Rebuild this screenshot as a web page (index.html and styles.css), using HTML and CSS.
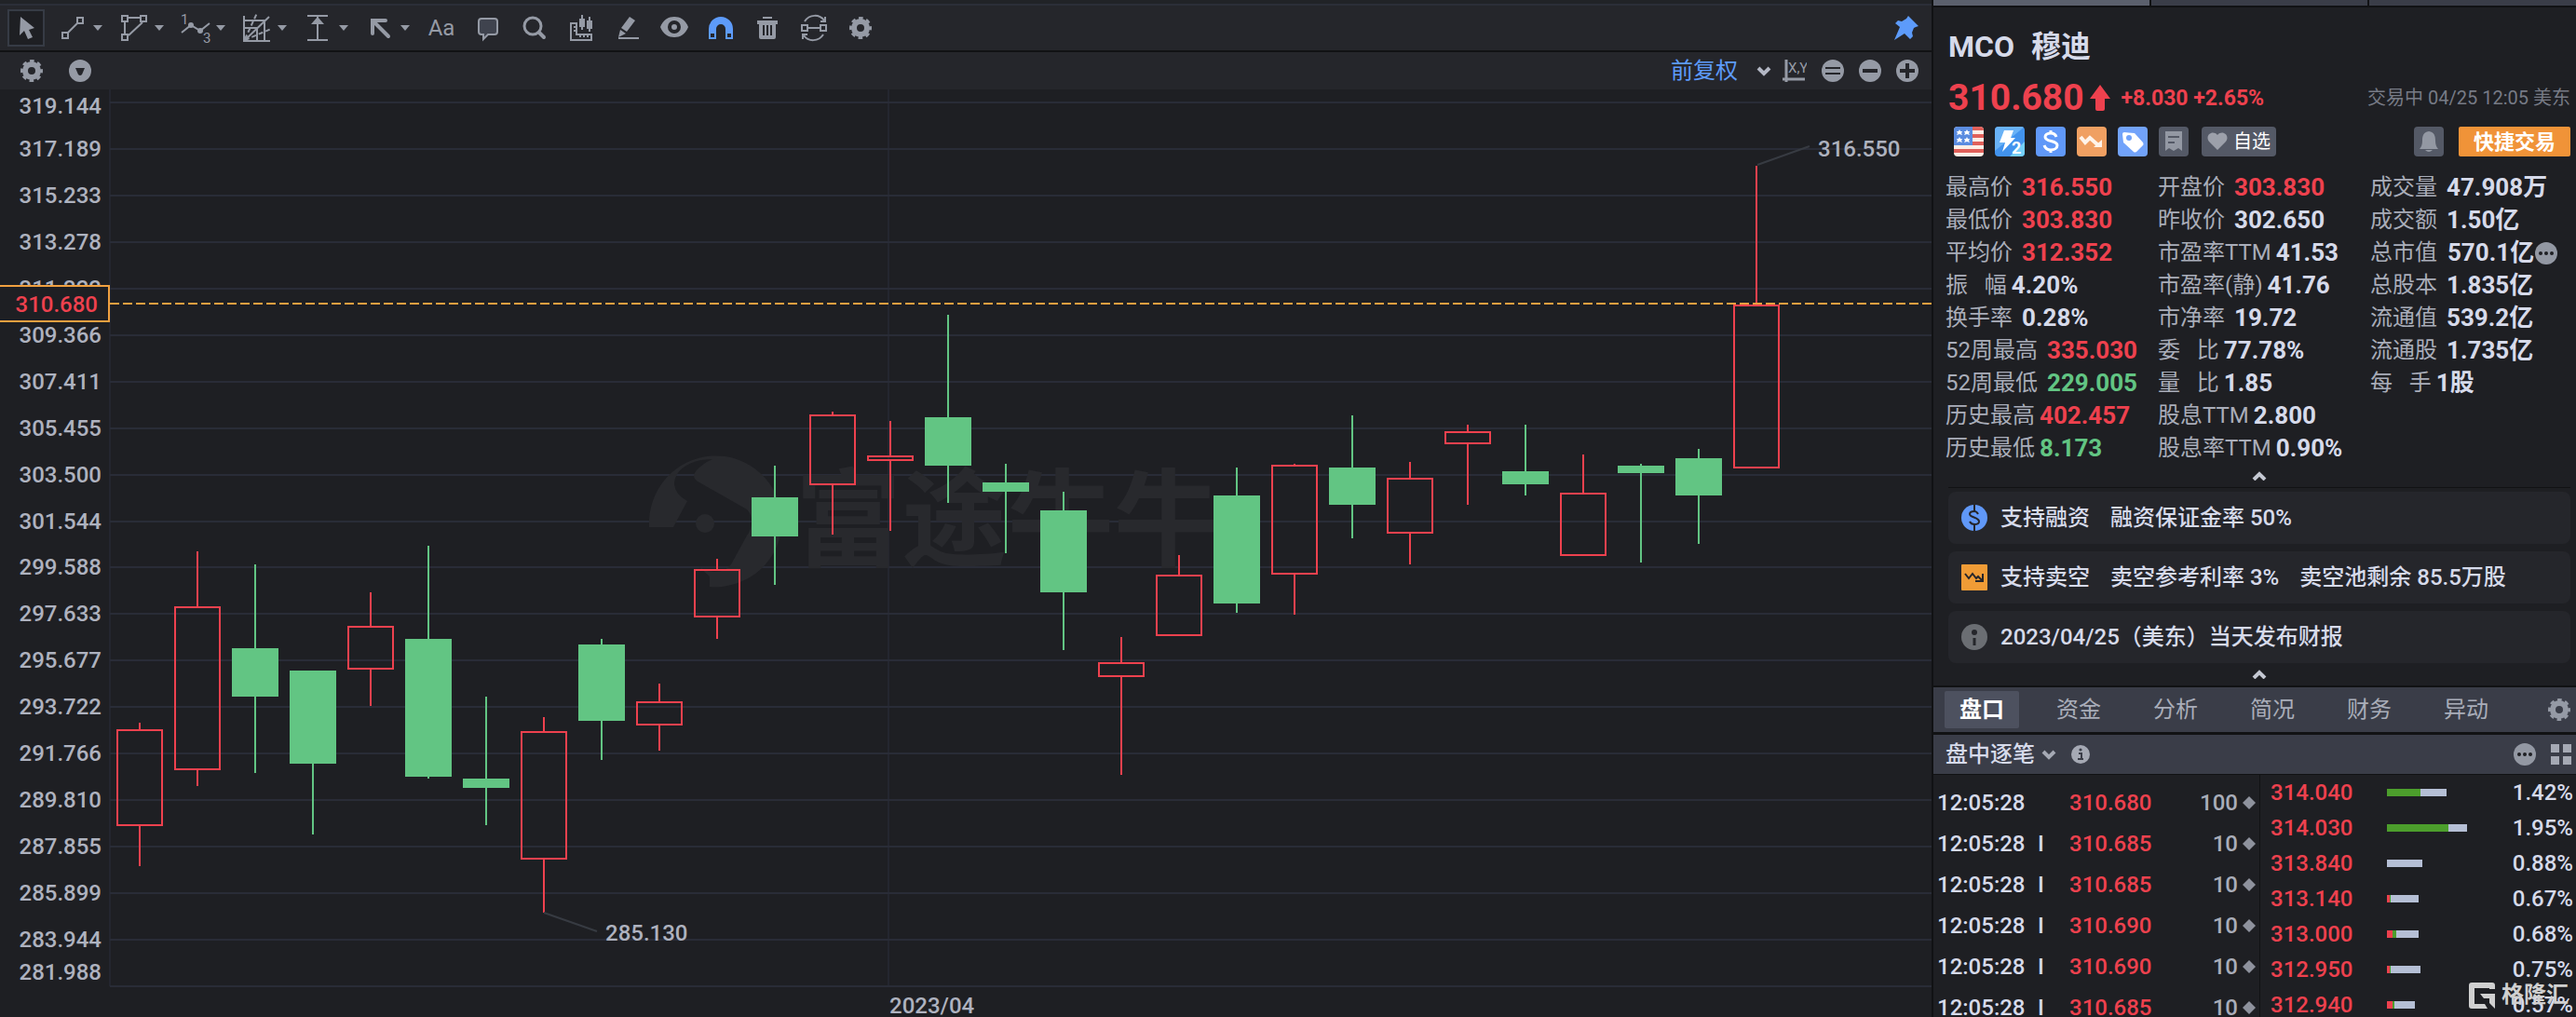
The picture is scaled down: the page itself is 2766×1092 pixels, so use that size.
FILE: index.html
```html
<!DOCTYPE html>
<html lang="zh-CN">
<head>
    <meta charset="utf-8">
    <meta name="viewport" content="width=device-width, initial-scale=1">
    <title>MCO 穆迪</title>
    <link rel="stylesheet" href="styles.css">
</head>

<body>
    <svg class="defs" aria-hidden="true">
        <symbol id="gear" viewBox="0 0 24 24">
            <circle cx="12" cy="12" r="7" fill="none" stroke="currentColor" stroke-width="6"/>
            <circle cx="12" cy="12" r="10.5" fill="none" stroke="currentColor" stroke-width="3" stroke-dasharray="4.6 3.65" stroke-dashoffset="2.3"/>
        </symbol>
        <symbol id="caret" viewBox="0 0 10 6">
            <path d="M0 0h10L5 6z" fill="currentColor"/>
        </symbol>
        <symbol id="up" viewBox="0 0 16 10">
            <path d="M2 9l6-6 6 6" fill="none" stroke="currentColor" stroke-width="4"/>
        </symbol>
        <symbol id="down" viewBox="0 0 16 12">
            <path d="M2 3l6 6 6-6" fill="none" stroke="currentColor" stroke-width="4"/>
        </symbol>
        <symbol id="dots" viewBox="0 0 24 24">
            <circle cx="12" cy="12" r="12" fill="currentColor"/>
            <g fill="#1e1f23"><circle cx="6" cy="12" r="2"/><circle cx="12" cy="12" r="2"/><circle cx="18" cy="12" r="2"/></g>
        </symbol>
    </svg>

    <div class="app">
        <main class="chart">
            <div class="strip"></div>
            <div class="toolbar">
                <button type="button" class="pick active" aria-label="选择"><svg viewBox="0 0 36 36"><path d="M12 6l15 12-6 2 4 8-5 2-4-9-5 5z" fill="currentColor"/></svg></button>
                <button type="button" class="tool" aria-label="线段"><svg viewBox="0 0 36 36" class="ln"><path d="M7 23h6v6H7zM23 7h6v6h-6zM13 23l10-10"/></svg><svg class="caret"><use href="#caret"/></svg></button>
                <button type="button" class="tool" aria-label="形状"><svg viewBox="0 0 36 36" class="ln"><path d="M5 5h6v6H5zM25 5h6v6h-6zM5 25h6v6H5zM12 7h12M8 12v12M12 26l15-14"/></svg><svg class="caret"><use href="#caret"/></svg></button>
                <button type="button" class="tool" aria-label="波浪"><svg viewBox="0 0 36 36" class="ln wave"><path d="M3 23l10-8 10 6 10-8"/><g class="fl"><circle cx="13" cy="15" r="3"/><circle cx="23" cy="21" r="3"/><text x="2" y="14">1</text><text x="26" y="34">3</text></g></svg><svg class="caret"><use href="#caret"/></svg></button>
                <button type="button" class="tool" aria-label="江恩"><svg viewBox="0 0 36 36" class="ln"><path d="M4 5v27h28M4 10h22v22M4 18h14v14M4 32L31 6"/><path d="M5 30L18 2M5 31l28-12" stroke-dasharray="5 3"/></svg><svg class="caret"><use href="#caret"/></svg></button>
                <button type="button" class="tool" aria-label="测量"><svg viewBox="0 0 36 36" class="ln"><path d="M6 5h22M6 31h22M17 6v25"/><path class="fl" d="M17 6l7 8H10z"/></svg><svg class="caret"><use href="#caret"/></svg></button>
                <button type="button" class="tool" aria-label="箭头"><svg viewBox="0 0 36 36" class="ln bold"><path d="M24 10H10v14M11 11l16 16"/></svg><svg class="caret"><use href="#caret"/></svg></button>
                <button type="button" class="single text">Aa</button>
                <button type="button" class="single" aria-label="注释"><svg viewBox="0 0 36 36" class="ln"><path d="M11 8h14a3 3 0 0 1 3 3v11a3 3 0 0 1-3 3h-7l-5 5v-5h-2a3 3 0 0 1-3-3V11a3 3 0 0 1 3-3z" fill="#3f434e"/></svg></button>
                <button type="button" class="single" aria-label="放大"><svg viewBox="0 0 36 36" class="ln bold"><circle cx="16" cy="16" r="9" stroke-width="3"/><path d="M23 23l5 5"/></svg></button>
                <button type="button" class="single" aria-label="区间统计"><svg viewBox="0 0 36 36" class="ln"><path d="M7 13h6v12h16v6H7zM10 17h3M10 21h3M17 28v-3M21 28v-3M25 28v-3M19 4v16M27 6v16"/><path class="fl" d="M16 8h6v9h-6zM24 10h6v9h-6z"/></svg></button>
                <button type="button" class="single" aria-label="画笔"><svg viewBox="0 0 36 36" class="ln"><path d="M8 29h22"/><path class="fl" d="M20 6l6 4-9 12-6-4zM10 20l6 4-8 4z"/></svg></button>
                <button type="button" class="single" aria-label="显示"><svg viewBox="0 0 36 36"><path d="M3 17C6 9 12 6 18 6s12 3 15 11c-3 8-9 11-15 11S6 25 3 17z" fill="currentColor"/><circle cx="18" cy="17" r="5" fill="currentColor" stroke="#25262b" stroke-width="4"/></svg></button>
                <button type="button" class="single blue" aria-label="磁铁"><svg viewBox="0 0 36 36"><path d="M5 30V19a13 13 0 0 1 26 0v11h-8V19a5 5 0 0 0-10 0v11z" fill="currentColor"/><path d="M7 24h4v4H7zM25 24h4v4h-4z" fill="#25262b"/></svg></button>
                <button type="button" class="single" aria-label="删除"><svg viewBox="0 0 36 36"><path d="M13 6h10v2H13zM7 10h22v4h-2v14a2 2 0 0 1-2 2H11a2 2 0 0 1-2-2V14H7z" fill="currentColor"/><path d="M14 15v11M18 15v11M22 15v11" stroke="#25262b" stroke-width="2"/></svg></button>
                <button type="button" class="single" aria-label="同步"><svg viewBox="0 0 36 36" class="ln"><path d="M5 15h6v6H5zM25 15h6v6h-6zM12 18h12M8 11c5-8 16-8 21-1M30 6v5h-5M28 25c-5 8-16 8-21 1M6 30v-5h5"/></svg></button>
                <button type="button" class="single" aria-label="设置"><svg class="i24"><use href="#gear"/></svg></button>
                <button type="button" class="pin blue" aria-label="固定"><svg viewBox="0 0 26 26"><path d="M15 0l11 11-3 1-2 1-2 5 1 4-3 3-6-6L0 26l6-14-5-4 3-3 4 1 5-3z" fill="currentColor"/></svg></button>
            </div>
            <div class="subbar">
                <button type="button" aria-label="图表设置"><svg class="i24"><use href="#gear"/></svg></button>
                <button type="button" aria-label="展开"><svg class="i24" viewBox="0 0 24 24"><circle cx="12" cy="12" r="12" fill="currentColor"/><path d="M7 9h10l-3 7q-2 2-4 0z" fill="#25262b"/></svg></button>
                <label class="adjust"><select aria-label="复权方式"><option>前复权</option></select><svg class="chev"><use href="#down"/></svg></label>
                <button type="button" class="xy" aria-label="坐标"><svg viewBox="0 0 26 24" class="ln"><path d="M4 0v24M0 21h24" stroke-width="3"/><text x="6" y="14">X,Y</text></svg></button>
                <div class="zooms">
                    <button type="button" aria-label="重置"><svg class="i24" viewBox="0 0 24 24"><circle cx="12" cy="12" r="12" fill="currentColor"/><path d="M4 9h16M4 15h16" stroke="#25262b" stroke-width="2"/></svg></button>
                    <button type="button" aria-label="缩小"><svg class="i24" viewBox="0 0 24 24"><circle cx="12" cy="12" r="12" fill="currentColor"/><path d="M4 12h16" stroke="#25262b" stroke-width="4"/></svg></button>
                    <button type="button" aria-label="放大"><svg class="i24" viewBox="0 0 24 24"><circle cx="12" cy="12" r="12" fill="currentColor"/><path d="M4 12h16M12 4v16" stroke="#25262b" stroke-width="4"/></svg></button>
                </div>
            </div>
            <svg id="kline" class="kline" viewBox="0 96 2074 996">
                <g id="grid"></g>
                <g class="mark">
                    <path d="M697 566A71 72 0 0 1 840 558A72 72 0 0 1 762 630V619L750 608Q758 614 767 614C776 614 781 611 785 606L802 575Q807 569 807 560Q807 552 802 547L751 518Q741 513 748 505Q755 497 765 493C742 493 724 504 724 520Q725 531 738 538L723 566z"/>
                    <circle cx="757" cy="562" r="10"/>
                    <text x="854" y="599">富途牛牛</text>
                </g>
                <g id="candles"></g>
                <path class="last" d="M118 326H2074"/>
                <path class="lead" d="M1887 177l56-20M584 980l57 20"/>
                <text class="lbl" x="1952" y="168">316.550</text>
                <text class="lbl" x="650" y="1010">285.130</text>
                <text class="lbl" x="955" y="1088">2023/04</text>
                <rect class="tag" x="-2" y="307" width="119" height="38"/>
                <text class="lbl now" x="105" y="335">310.680</text>
            </svg>
        </main>

        <aside class="side">
            <div class="pages"><span class="on"></span><span></span><span></span></div>
            <header class="quote">
                <h1>MCO <span>穆迪</span></h1>
                <div class="price">
                    <strong>310.680</strong>
                    <svg viewBox="0 0 22 28"><path d="M11 0l11 15h-6v11q0 2-2 2H8q-2 0-2-2V15H0z" fill="currentColor"/></svg>
                    <b>+8.030 +2.65%</b>
                    <time>交易中 04/25 12:05 美东</time>
                </div>
                <div class="badges">
                    <svg viewBox="0 0 32 32"><path d="M0 0h32v32H0z" fill="#fdeee6"/><path d="M20 0h12v4H20zM20 8h12v4H20zM20 16h12v4H20zM0 24h32v4H0z" fill="#e0605a"/><path d="M0 0h20v20H0z" fill="#5b8ce0"/><g fill="#fff"><path id="s" d="M6 3l1 2h2l-1 2 1 2-3-1-3 1 1-2-1-2h2z"/><use href="#s" x="8"/><use href="#s" y="8"/><use href="#s" x="8" y="8"/></g></svg>
                    <svg viewBox="0 0 32 32"><path d="M0 0h32v32H0z" fill="#4293ee"/><path d="M0 0h32L0 26z" fill="#69b2f6"/><path d="M32 16v16H16z" fill="#74d0fb"/><path d="M10 4h10l-3 8h5L8 27l3-10H5z" fill="#fff"/><text x="18" y="29" class="two">2</text></svg>
                    <svg viewBox="0 0 32 32"><path d="M0 0h32v32H0z" fill="#6098f8"/><path d="M22 11c-1-3-4-4-6-4-4 0-6 2-6 4 0 6 13 3 13 9 0 3-3 5-7 5s-6-2-7-5M16 4v4M16 24v4" fill="none" stroke="#fff" stroke-width="3"/></svg>
                    <svg viewBox="0 0 32 32"><path d="M0 0h32v32H0z" fill="#f0a062"/><path d="M4 11l5 6 5-5 9 8" fill="none" stroke="#fff4ea" stroke-width="4"/><path d="M27 14v8h-9z" fill="#fff4ea"/></svg>
                    <svg viewBox="0 0 32 32"><path d="M0 0h32v32H0z" fill="#72a3fa"/><path d="M5 8q0-2 2-2l11 1 9 10q1 2 0 3l-7 7q-2 1-3 0L6 17z" fill="#fff"/><circle cx="12" cy="12" r="3" fill="#72a3fa"/></svg>
                    <svg viewBox="0 0 32 32"><path d="M0 0h32v32H0z" fill="#545966"/><path d="M7 5h18v21l-4-3-5 3-5-3-4 3z" fill="#9398a3"/><path d="M10 11h12M10 17h7" stroke="#545966" stroke-width="2"/></svg>
                    <button type="button" class="fav"><svg viewBox="0 0 22 20"><path d="M11 19L2 10C-3 3 6-3 11 3c5-6 14 0 9 7z" fill="#9ca0aa"/></svg>自选</button>
                    <button type="button" class="bell" aria-label="提醒"><svg viewBox="0 0 32 32"><path d="M16 5c6 1 7 5 7 10 0 4 1 7 3 9H6c2-2 3-5 3-9 0-5 1-9 7-10zM12 25h8q-4 4-8 0z" fill="#9398a3"/></svg></button>
                    <button type="button" class="trade">快捷交易</button>
                </div>
            </header>

            <div class="stats">
                <dl>
                    <div><dt>最高价</dt><dd class="red">316.550</dd></div>
                    <div><dt>最低价</dt><dd class="red">303.830</dd></div>
                    <div><dt>平均价</dt><dd class="red">312.352</dd></div>
                    <div class="tight"><dt>振&nbsp;&nbsp;&nbsp;幅</dt><dd>4.20%</dd></div>
                    <div><dt>换手率</dt><dd>0.28%</dd></div>
                    <div><dt>52周最高</dt><dd class="red">335.030</dd></div>
                    <div><dt>52周最低</dt><dd class="green">229.005</dd></div>
                    <div class="tight"><dt>历史最高</dt><dd class="red">402.457</dd></div>
                    <div class="tight"><dt>历史最低</dt><dd class="green">8.173</dd></div>
                </dl>
                <dl>
                    <div><dt>开盘价</dt><dd class="red">303.830</dd></div>
                    <div><dt>昨收价</dt><dd>302.650</dd></div>
                    <div class="tight"><dt>市盈率TTM</dt><dd>41.53</dd></div>
                    <div class="tight"><dt>市盈率(静)</dt><dd>41.76</dd></div>
                    <div><dt>市净率</dt><dd>19.72</dd></div>
                    <div class="tight"><dt>委&nbsp;&nbsp;&nbsp;比</dt><dd>77.78%</dd></div>
                    <div class="tight"><dt>量&nbsp;&nbsp;&nbsp;比</dt><dd>1.85</dd></div>
                    <div class="tight"><dt>股息TTM</dt><dd>2.800</dd></div>
                    <div class="tight"><dt>股息率TTM</dt><dd>0.90%</dd></div>
                </dl>
                <dl>
                    <div><dt>成交量</dt><dd>47.908万</dd></div>
                    <div><dt>成交额</dt><dd>1.50亿</dd></div>
                    <div class="tight"><dt>总市值&nbsp;</dt><dd>570.1亿</dd><svg class="i24"><use href="#dots"/></svg></div>
                    <div><dt>总股本</dt><dd>1.835亿</dd></div>
                    <div><dt>流通值</dt><dd>539.2亿</dd></div>
                    <div><dt>流通股</dt><dd>1.735亿</dd></div>
                    <div class="tight"><dt>每&nbsp;&nbsp;&nbsp;手</dt><dd>1股</dd></div>
                </dl>
            </div>
            <button type="button" class="fold" aria-label="收起"><svg><use href="#up"/></svg></button>

            <div class="cards">
                <p><svg viewBox="0 0 28 28"><circle cx="14" cy="14" r="14" fill="#6098f8"/><path d="M14 0v7M14 21v7" stroke="#25262b" stroke-width="2"/><path d="M18 10c-1-2-2-3-4-3-3 0-5 1-5 3 0 4 10 3 10 8 0 2-2 3-5 3s-4-1-5-3" fill="none" stroke="#25262b" stroke-width="2"/></svg><span>支持融资</span><span>融资保证金率 50%</span></p>
                <p><svg viewBox="0 0 28 28"><rect width="28" height="28" rx="1" fill="#f09c36"/><path d="M4 10l4 5 4-5 4 5 2-2 4 4M23 10v8h-8" fill="none" stroke="#25262b" stroke-width="2"/></svg><span>支持卖空</span><span>卖空参考利率 3%</span><span>卖空池剩余 85.5万股</span></p>
                <p><svg viewBox="0 0 28 28"><circle cx="14" cy="14" r="14" fill="#6b6e73"/><circle cx="14" cy="9" r="3" fill="#25262b"/><path d="M14 15v8" stroke="#25262b" stroke-width="3"/></svg><span>2023/04/25（美东）当天发布财报</span></p>
            </div>
            <button type="button" class="fold" aria-label="收起提示"><svg><use href="#up"/></svg></button>

            <nav class="tabs">
                <a href="#" class="on">盘口</a>
                <a href="#">资金</a>
                <a href="#">分析</a>
                <a href="#">简况</a>
                <a href="#">财务</a>
                <a href="#">异动</a>
                <button type="button" aria-label="设置"><svg class="i24"><use href="#gear"/></svg></button>
            </nav>
            <div class="tickbar">
                <label><select aria-label="逐笔"><option>盘中逐笔</option></select><svg class="chev"><use href="#down"/></svg></label>
                <svg class="info" viewBox="0 0 20 20"><circle cx="10" cy="10" r="10" fill="currentColor"/><path d="M8 9h3v6M7 15h6" fill="none" stroke="#3a3d48" stroke-width="2"/><circle cx="10" cy="5" r="1.6" fill="#3a3d48"/></svg>
                <svg class="i24 more"><use href="#dots"/></svg>
                <svg class="apps" viewBox="0 0 22 22"><path d="M0 0h9v9H0zM13 0h9v9h-9zM0 13h9v9H0zM13 13h9v9h-9z" fill="currentColor"/></svg>
            </div>
            <div class="ticks">
                <table class="trades"><tbody id="trades"></tbody></table>
                <table class="levels"><tbody id="levels"></tbody></table>
            </div>
        </aside>
        <div class="brand"><svg viewBox="0 0 28 28"><path d="M28 7V3q0-3-3-3H3Q0 0 0 3v22q0 3 3 3h17l-3-5H6V6h16v1zM12 12h16v16l-6-6v-5h-6z" fill="currentColor"/></svg>格隆汇</div>
    </div>
    <script src="script.js"></script>
</body>
</html>
```
FILE: styles.css
```css
* {
    box-sizing: border-box;
}

body {
    margin: 0;
    background: #1e1f23;
    color: #d6daea;
    font-family: Roboto, "Noto Sans CJK SC", sans-serif;
    font-size: 24px;
    line-height: 35px;
}

button,
select {
    margin: 0;
    padding: 0;
    border: 0;
    background: none;
    color: inherit;
    font: inherit;
    appearance: none;
    cursor: pointer;
}

button {
    display: flex;
    align-items: center;
    justify-content: center;
}

svg {
    display: block;
    flex: none;
}

.defs {
    position: absolute;
    width: 0;
    height: 0;
}

.i24 {
    width: 24px;
    height: 24px;
}

.chev {
    width: 16px;
    height: 12px;
}

.blue {
    color: #5d9bfa;
}

.red {
    color: #ee414e;
}

.green {
    color: #62c583;
}

.app {
    position: relative;
    display: flex;
    height: 100vh;
    overflow: hidden;
}

/* chart */
.chart {
    flex: 1;
    min-width: 0;
    color: #959aa5;
}

.strip {
    height: 6px;
    background: #212327;
    border-bottom: 2px solid #2b2e38;
}

.toolbar {
    display: flex;
    align-items: center;
    height: 50px;
    padding: 0 14px 0 8px;
    background: #25262b;
    border-bottom: 2px solid #111214;
}

.toolbar svg {
    width: 36px;
    height: 36px;
}

.toolbar .caret {
    width: 10px;
    height: 6px;
}

.toolbar .i24 {
    width: 24px;
    height: 24px;
}

.pick {
    width: 40px;
    height: 40px;
    margin-right: 12px;
    background: #1e1f23;
    border: 2px solid #363b45;
}

.tool {
    gap: 4px;
    margin-right: 16px;
}

.single {
    width: 36px;
    margin-right: 14px;
}

.pin {
    margin-left: auto;
}

.toolbar .pin svg {
    width: 26px;
    height: 26px;
}

.ln {
    fill: none;
    stroke: currentColor;
    stroke-width: 2;
}

.ln.bold {
    stroke-width: 4;
    stroke-linecap: round;
}

.ln.wave {
    overflow: visible;
}

.ln .fl,
.ln text {
    fill: currentColor;
    stroke: none;
    font-size: 15px;
}

.subbar {
    display: flex;
    align-items: center;
    gap: 28px;
    height: 40px;
    padding: 0 14px 0 22px;
    background: #25262b;
}

.adjust {
    display: flex;
    align-items: center;
    gap: 20px;
    margin-left: auto;
    color: #b3b7c4;
}

.adjust select {
    color: #5d9bfa;
}

.subbar .xy {
    margin-left: -16px;
}

.xy svg {
    width: 26px;
    height: 24px;
}

.zooms {
    display: flex;
    gap: 16px;
    margin-left: -12px;
}

.kline {
    width: 100%;
}

.grid {
    stroke: #292c37;
    stroke-width: 2;
}

.lbl {
    fill: #aeb2bf;
    font-size: 24px;
    font-weight: 500;
}

.axis,
.now {
    text-anchor: end;
}

.now {
    fill: #ee414e;
}

.tag {
    fill: #1e1f23;
    stroke: #f0a040;
    stroke-width: 2;
}

.last {
    stroke: #f0a040;
    stroke-width: 2;
    stroke-dasharray: 10 4;
}

.lead {
    fill: none;
    stroke: #373b42;
    stroke-width: 2;
}

.mark {
    fill: #28292d;
    font-size: 114px;
    font-weight: 700;
}

.up {
    fill: none;
    stroke: #ee414e;
    stroke-width: 2;
}

.down {
    fill: #62c583;
    stroke: #62c583;
    stroke-width: 2;
}

/* quote panel */
.side {
    display: flex;
    flex-direction: column;
    width: 692px;
    flex: none;
    border-left: 2px solid #111214;
}

.pages {
    display: grid;
    grid-template-columns: 232px 232px 1fr;
    gap: 2px;
    height: 8px;
    background: #111214;
    border-bottom: 2px solid #111214;
}

.pages span {
    background: #3a3d48;
}

.pages .on {
    background: #5b606d;
}

.quote {
    padding: 22px 6px 0 16px;
}

h1 {
    display: flex;
    gap: 18px;
    margin: 0;
    font-size: 32px;
    font-weight: 700;
    line-height: 40px;
}

.price {
    display: flex;
    align-items: center;
    height: 50px;
    margin-top: 10px;
    color: #ee414e;
}

.price strong {
    font-size: 39px;
    font-weight: 700;
}

.price svg {
    width: 22px;
    height: 28px;
    margin: 0 12px 0 6px;
}

.price b {
    font-size: 23px;
    font-weight: 700;
}

.price time {
    margin-left: auto;
    color: #777b86;
    font-size: 20px;
}

.badges {
    display: flex;
    gap: 12px;
    margin: 6px 0 16px 6px;
}

.badges > svg,
.bell {
    width: 32px;
    height: 32px;
    border-radius: 4px;
}

.two {
    fill: #fff;
    font-size: 18px;
    font-weight: 700;
}

.fav {
    gap: 6px;
    width: 80px;
    height: 32px;
    margin-left: 2px;
    background: #545966;
    border-radius: 4px;
    color: #fff;
    font-size: 20px;
}

.fav svg {
    width: 22px;
    height: 20px;
}

.bell {
    margin: 0 4px 0 auto;
    background: #545966;
}

.bell svg {
    width: 32px;
}

.trade {
    width: 120px;
    height: 32px;
    background: #f09338;
    border-radius: 2px;
    color: #fff;
    font-size: 22px;
    font-weight: 700;
}

.stats {
    display: grid;
    grid-template-columns: 228px 228px 1fr;
    padding-left: 13px;
    white-space: nowrap;
}

dl,
dd {
    margin: 0;
}

.stats dl div {
    display: flex;
    align-items: center;
    gap: 10px;
    height: 35px;
}

.stats dl .tight {
    gap: 5px;
}

.stats dl .i24 {
    margin-left: -4px;
}

dt {
    color: #a9adb9;
}

dd {
    font-size: 26px;
    font-weight: 700;
}

.stats .i24,
.more {
    color: #9398a3;
}

.fold {
    height: 24px;
    padding-left: 10px;
    color: #c4c8d2;
}

.fold svg {
    width: 16px;
    height: 10px;
}

.cards {
    display: flex;
    flex-direction: column;
    gap: 8px;
    margin: 0 6px 0 16px;
    padding-top: 4px;
    border-top: 1px solid #111214;
}

.cards p {
    display: flex;
    align-items: center;
    gap: 22px;
    height: 56px;
    margin: 0;
    padding: 0 14px;
    background: #25262b;
    border-radius: 8px;
    font-weight: 500;
    white-space: nowrap;
}

.cards svg {
    width: 28px;
    height: 28px;
    margin-right: -8px;
}

.tabs {
    display: flex;
    align-items: center;
    gap: 24px;
    height: 53px;
    padding: 0 6px 0 12px;
    background: #3a3d48;
    border-top: 2px solid #111214;
    border-bottom: 3px solid #111214;
}

.tabs a {
    width: 80px;
    color: #a9adb9;
    line-height: 40px;
    text-align: center;
    text-decoration: none;
}

.tabs .on {
    background: #4d515f;
    border-radius: 2px;
    color: #fff;
    font-weight: 700;
}

.tabs button {
    margin-left: auto;
    color: #959aa5;
}

.tickbar {
    display: flex;
    align-items: center;
    gap: 16px;
    height: 43px;
    padding: 0 5px 0 13px;
    background: #3a3d48;
    border-bottom: 1px solid #111214;
    color: #a5a9b4;
}

.tickbar label {
    display: flex;
    align-items: center;
    gap: 7px;
}

.tickbar select {
    color: #d6daea;
    font-weight: 500;
}

.info {
    width: 20px;
    height: 20px;
}

.more {
    margin-left: auto;
}

.apps {
    width: 22px;
    height: 22px;
}

.ticks {
    display: grid;
    grid-template-columns: 350px 1fr;
    align-items: start;
    flex: 1;
    min-height: 0;
}

table {
    width: 100%;
    border-collapse: collapse;
    table-layout: fixed;
    font-weight: 500;
}

td {
    padding: 0;
    white-space: nowrap;
}

.trades {
    margin-top: 8px;
}

.trades tr {
    height: 44px;
}

.trades td:nth-child(1) {
    width: 112px;
    padding-left: 4px;
}

.trades td:nth-child(2) {
    width: 34px;
}

.trades td:nth-child(4) {
    width: 90px;
    padding-right: 4px;
    color: #a9adb9;
}

.qty {
    display: flex;
    align-items: center;
    justify-content: flex-end;
    gap: 5px;
}

.qty svg {
    width: 14px;
    height: 14px;
    color: #8e929d;
}

.levels {
    height: 266px;
    border-left: 1px solid #111214;
}

.levels tr {
    height: 38px;
}

.levels td:nth-child(1) {
    width: 136px;
    padding-left: 11px;
}

.levels td:nth-child(3) {
    padding-right: 3px;
    text-align: right;
}

.bar {
    display: flex;
    height: 8px;
}

.bar i {
    background: #b5bfd5;
}

.bar .sell {
    background: #ee414e;
}

.bar .buy {
    background: #4c9e2c;
}

/* publisher mark over the corner */
.brand {
    position: absolute;
    right: 8px;
    bottom: 6px;
    display: flex;
    align-items: center;
    gap: 7px;
    color: #d0d0d0;
    font-weight: 700;
}

.brand svg {
    width: 28px;
    height: 28px;
}
```
FILE: script.js
```js
// x step between candles
var step = 62;

// high, low, body top, body bottom, direction (1 = up)
var candles = [
    [776, 930, 783, 887, 1],
    [592, 844, 651, 827, 1],
    [606, 830, 696, 748, 0],
    [720, 896, 720, 820, 0],
    [636, 758, 672, 719, 1],
    [586, 836, 686, 834, 0],
    [748, 886, 836, 846, 0],
    [770, 980, 785, 923, 1],
    [686, 816, 692, 774, 0],
    [734, 806, 753, 779, 1],
    [600, 686, 611, 663, 1],
    [500, 628, 534, 576, 0],
    [442, 574, 445, 521, 1],
    [452, 570, 489, 495, 1],
    [338, 540, 448, 500, 0],
    [498, 594, 518, 528, 0],
    [528, 698, 548, 636, 0],
    [684, 832, 711, 727, 1],
    [596, 683, 617, 683, 1],
    [502, 658, 532, 648, 0],
    [498, 660, 499, 617, 1],
    [446, 578, 502, 542, 0],
    [496, 606, 513, 573, 1],
    [456, 542, 463, 477, 1],
    [456, 532, 506, 520, 0],
    [488, 597, 529, 597, 1],
    [498, 604, 500, 508, 0],
    [482, 584, 492, 532, 0],
    [178, 503, 327, 503, 1]
];

var prices = ["319.144", "317.189", "315.233", "313.278", "311.322", "309.366", "307.411",
    "305.455", "303.500", "301.544", "299.588", "297.633", "295.677", "293.722", "291.766",
    "289.810", "287.855", "285.899", "283.944", "281.988"];

var grid = '<path class="grid" d="M118 96V1059M954 96V1059" opacity="0.6"/>';
prices.forEach(function (price, i) {
    var y = 110 + i * 50 - Math.round(i / 20);
    var ty = y;
    if (i == 0) ty = y + 4;
    if (i == prices.length - 1) ty = y - 15;
    grid += '<path class="grid" d="M118 ' + y + 'H2074"/>';
    grid += '<text class="lbl axis" x="109" y="' + (ty + 8) + '">' + price + '</text>';
});
document.getElementById("grid").innerHTML = grid;

var bars = "";
candles.forEach(function (c, i) {
    var x = 150 + i * step;
    bars += '<g class="' + (c[4] ? "up" : "down") + '">';
    bars += '<path d="M' + x + ' ' + c[0] + 'V' + c[2] + 'M' + x + ' ' + c[3] + 'V' + c[1] + '"/>';
    bars += '<rect x="' + (x - 24) + '" y="' + (c[2] + 1) + '" width="48" height="' + (c[3] - c[2] - 2) + '"/></g>';
});
document.getElementById("candles").innerHTML = bars;

var trades = [
    ["", "310.680", 100],
    ["I", "310.685", 10],
    ["I", "310.685", 10],
    ["I", "310.690", 10],
    ["I", "310.690", 10],
    ["I", "310.685", 10]
];
document.getElementById("trades").innerHTML = trades.map(function (t) {
    return '<tr><td>12:05:28</td><td>' + t[0] + '</td><td class="red">' + t[1] + '</td><td><div class="qty">' + t[2] +
        '<svg viewBox="0 0 14 14"><path d="M7 0l7 7-7 7-7-7z" fill="currentColor"/></svg></div></td></tr>';
}).join("");

// price, sell, buy, neutral, share
var levels = [
    ["314.040", 0, 36, 28, "1.42%"],
    ["314.030", 0, 66, 20, "1.95%"],
    ["313.840", 0, 0, 38, "0.88%"],
    ["313.140", 3, 1, 30, "0.67%"],
    ["313.000", 6, 4, 24, "0.68%"],
    ["312.950", 3, 1, 32, "0.75%"],
    ["312.940", 6, 2, 22, "0.57%"]
];
document.getElementById("levels").innerHTML = levels.map(function (l) {
    return '<tr><td class="red">' + l[0] + '</td><td><div class="bar"><i class="sell" style="width:' + l[1] +
        'px"></i><i class="buy" style="width:' + l[2] + 'px"></i><i style="width:' + l[3] +
        'px"></i></div></td><td>' + l[4] + '</td></tr>';
}).join("");
```
